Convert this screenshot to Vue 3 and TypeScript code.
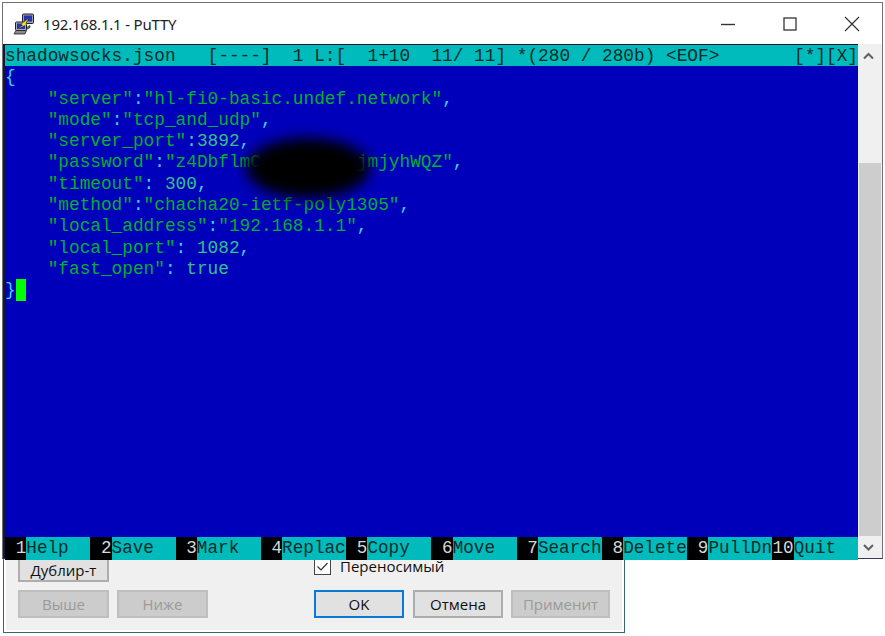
<script setup lang="ts">
interface Seg { t: string; c: string }
const q = (s: string): Seg => ({ t: s, c: 'g' })
const p = (s: string): Seg => ({ t: s, c: 'p' })
const n = (s: string): Seg => ({ t: s, c: 'n' })
const lines: Seg[][] = [
  [p('{')],
  [q('    "server"'), p(':'), q('"hl-fi0-basic.undef.network"'), p(',')],
  [q('    "mode"'), p(':'), q('"tcp_and_udp"'), p(',')],
  [q('    "server_port"'), p(':'), n('3892'), p(',')],
  [q('    "password"'), p(':'), q('"z4DbflmC         jmjyhWQZ"'), p(',')],
  [q('    "timeout"'), p(': '), n('300'), p(',')],
  [q('    "method"'), p(':'), q('"chacha20-ietf-poly1305"'), p(',')],
  [q('    "local_address"'), p(':'), q('"192.168.1.1"'), p(',')],
  [q('    "local_port"'), p(': '), n('1082'), p(',')],
  [q('    "fast_open"'), p(': '), n('true')],
]
const keys = ['Help', 'Save', 'Mark', 'Replac', 'Copy', 'Move', 'Search', 'Delete', 'PullDn', 'Quit']
</script>

<template>
  <div class="page">
    <div class="win">
      <div class="titlebar">
        <svg class="appicon" viewBox="0 0 22 22" width="22" height="22">
          <path d="M8 19.500v-2l9-5v2z" fill="#777" stroke="#222" stroke-width=".7" />
          <rect x="9.500" y="1" width="11" height="9.500" rx="1" fill="#9aa0b4" stroke="#222" />
          <rect x="11" y="2.500" width="8" height="6" fill="#2433b0" />
          <rect x="2.500" y="9" width="11" height="8.500" rx="1" fill="#a9acbc" stroke="#222" />
          <rect x="4" y="10.500" width="8" height="5.500" fill="#2433b0" />
          <path d="M1 21l2-3.500h10.500l-1.500 3.500z" fill="#8b8b8b" stroke="#222" stroke-width=".8" />
          <path d="M5 16l4.500-3.500-1-1.500 7-5.500-3 5 2 .5-7 3.500z" fill="#fbe61a" stroke="#6d5e00" stroke-width=".4" />
        </svg>
        <span class="title">192.168.1.1 - PuTTY</span>
        <div class="controls">
          <svg width="16" height="16" viewBox="0 0 16 16"><path d="M1 8.500h14" stroke="#333" stroke-width="1.400" /></svg>
          <svg width="16" height="16" viewBox="0 0 16 16"><rect x="2" y="2" width="12" height="12" fill="none" stroke="#333" stroke-width="1.300" /></svg>
          <svg width="16" height="16" viewBox="0 0 16 16"><path d="M1 1l14 14M15 1L1 15" stroke="#333" stroke-width="1.200" /></svg>
        </div>
      </div>
      <div class="body">
        <div class="term">
          <div class="row status"><pre>shadowsocks.json   [----]  1 L:[  1+10  11/ 11] *(280 / 280b) &lt;EOF&gt;</pre><pre>[*][X]</pre></div>
          <div class="text">
            <div v-for="(l, i) in lines" :key="i" class="row"><pre><span v-for="(s, j) in l" :key="j" :class="s.c">{{ s.t }}</span></pre></div>
            <div class="row"><pre><span class="p">}</span><span class="cursor"> </span></pre></div>
            <div class="smudge"></div>
          </div>
          <div class="row fkeys">
            <template v-for="(k, i) in keys" :key="k">
              <span class="num">{{ i + 1 }}</span><span class="lbl">{{ k }}</span>
            </template>
          </div>
        </div>
        <div class="scroll">
          <svg class="arrow" width="22" height="16" viewBox="0 0 22 16"><path d="M6 10.500L10.500 6l4.500 4.500" fill="none" stroke="#606060" stroke-width="2" /></svg>
          <div class="track"><div class="thumb"></div></div>
          <svg class="arrow down" width="22" height="16" viewBox="0 0 22 16"><path d="M6 6l4.500 4.500L15 6" fill="none" stroke="#606060" stroke-width="2" /></svg>
        </div>
      </div>
    </div>
    <div class="dialog">
      <div class="line one">
        <button class="btn dup">Дублир-т</button>
        <label class="check">
          <svg width="17" height="17" viewBox="0 0 17 17"><rect x=".5" y=".5" width="16" height="16" fill="#fff" stroke="#444" /><path d="M3.500 8.500l3.500 3.500 6.500-7" fill="none" stroke="#333" stroke-width="1.200" /></svg>
          <span>Переносимый</span>
        </label>
      </div>
      <div class="line two">
        <button class="btn off">Выше</button>
        <button class="btn off">Ниже</button>
        <span class="grow"></span>
        <button class="btn ok narrow">OK</button>
        <button class="btn narrow cancel">Отмена</button>
        <button class="btn off apply">Применит</button>
      </div>
    </div>
  </div>
</template>

<style>
html, body { background: #fff; }
</style>

<style scoped>
.page { width: 885px; height: 636px; overflow: hidden; padding: 2px 0 0 2px; box-sizing: border-box; font-family: "Open Sans", "Noto Sans", sans-serif; }
.win { width: 881px; height: 557px; box-sizing: border-box; border: 1px solid #707070; border-bottom-color: #3a3a55; background: #fff; display: flex; flex-direction: column; position: relative; z-index: 1; }
.titlebar { height: 41px; flex: none; display: flex; align-items: center; padding-left: 10px; }
.appicon { margin-right: 8px; }
.title { font-size: 15px; letter-spacing: -0.2px; color: #222; font-family: "Noto Sans", sans-serif; }
.controls { margin-left: auto; display: flex; gap: 46px; padding-right: 22px; }
.body { flex: 1; display: flex; min-height: 0; background: #f0f0f0; }
.term { width: 855px; height: 514px; box-sizing: border-box; padding: 1px 0 0 2px; background: #16163a; display: flex; flex-direction: column; }
.text { flex: 1; background: #0000bb; position: relative; }
.row { height: 21.300px; line-height: 23px; font-family: "Liberation Mono", monospace; font-size: 17.770px; white-space: pre; flex: none; }
pre { margin: 0; font: inherit; }
.status { background: #00bbbb; color: #0b2b2b; display: flex; justify-content: space-between; }
.g { color: #00b030; }
.p { color: #3fd0e8; }
.n { color: #33c08a; }
.cursor { display: inline-block; width: 10.660px; height: 21.300px; background: #00ff00; vertical-align: top; }
.smudge { position: absolute; left: 241px; top: 72px; width: 124px; height: 60px; border-radius: 50%; background: #000; filter: blur(7px); }
.fkeys { display: grid; grid-template-columns: repeat(10, 21.320px 63.960px); background: #000; font-size: 17.600px; letter-spacing: 0.040px; }
.num { color: #d8d8d8; background: #000; text-align: right; }
.lbl { background: #00bbbb; color: #0b2b2b; overflow: hidden; }
.scroll { flex: 1; display: flex; flex-direction: column; background: #f0f0f0; padding-top: 2px; }
.arrow { flex: none; margin: 2px 0; }
.arrow.down { margin: 3px 0; }
.track { flex: 1; display: flex; flex-direction: column; justify-content: flex-end; }
.thumb { height: 373px; margin: 0 1px 0 1px; background: #cdcdcd; }
.dialog { width: 622px; height: 76px; margin-left: 1px; box-sizing: border-box; background: #f0f0f0; border: 1px solid #3c6472; border-top: 0; box-shadow: inset 0 -2px 0 #fff, inset 2px 0 0 #fff, inset -2px 0 0 #fff; padding: 0 0 0 14px; position: relative; }
.line { display: flex; align-items: flex-start; }
.one { height: 33px; margin-top: -2px; }
.two { padding-right: 14px; gap: 8px; }
.btn { box-sizing: border-box; width: 91px; height: 28px; padding: 0; background: #e1e1e1; border: 2px solid #adadad; color: #111; font-family: inherit; font-size: 15px; }
.dup { height: 25px; }
.off { background: #cccccc; border-color: #bfbfbf; color: #9a9a9a; }
.ok { border-color: #0a78d7; }
.narrow { width: 90px; }
.cancel { margin-left: 1px; }
.apply { width: 99px; }
.grow { flex: 1; }
.check { display: flex; align-items: flex-start; gap: 9px; margin-left: 205px; font-size: 15px; color: #111; padding-top: 1px; }
.check span { margin-top: -2px; }
</style>
